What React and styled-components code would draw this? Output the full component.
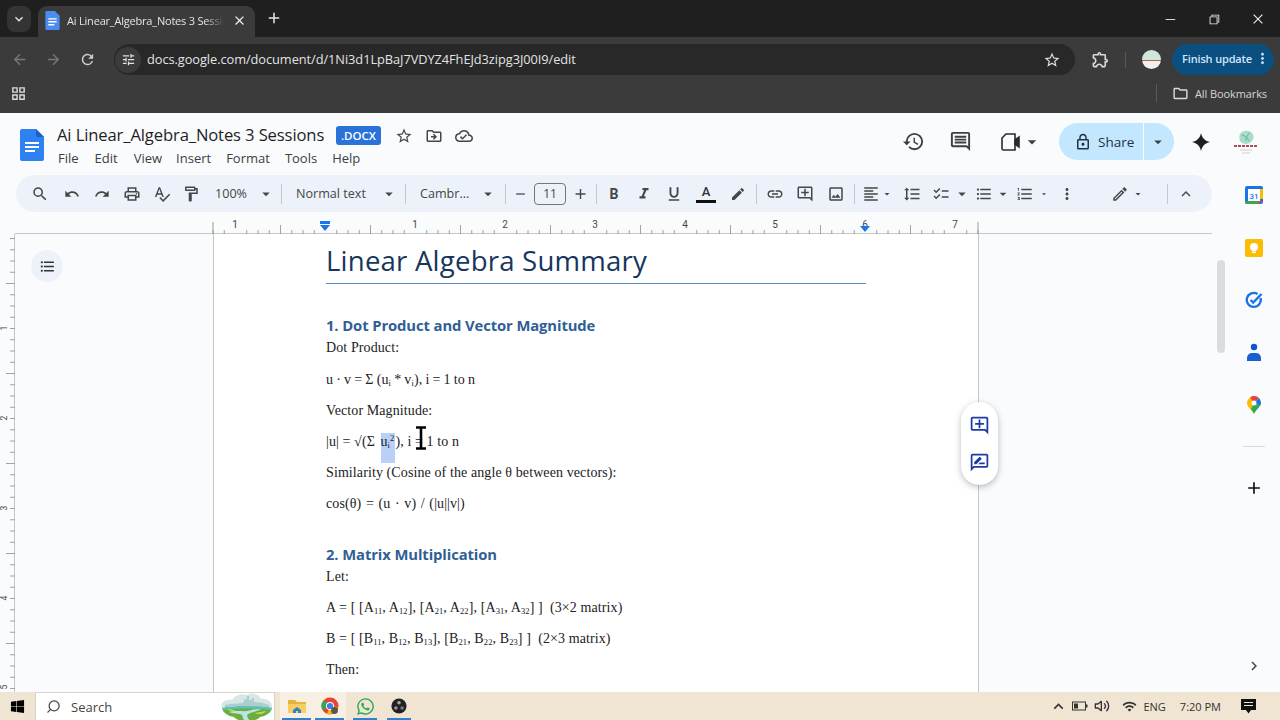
import React from "react";
import styled, { createGlobalStyle } from "styled-components";
import {
  MdSearch, MdUndo, MdRedo, MdOutlinePrint, MdSpellcheck, MdOutlineFormatPaint, MdRemove, MdAdd,
  MdFormatItalic, MdFormatUnderlined, MdLink, MdOutlineAddComment, MdOutlineImage, MdFormatAlignLeft,
  MdFormatLineSpacing, MdChecklist, MdFormatListBulleted, MdFormatListNumbered, MdMoreVert, MdOutlineEdit,
  MdKeyboardArrowUp, MdArrowDropDown, MdHistory, MdOutlineMessage, MdLockOutline,
  MdStarBorder, MdOutlineDriveFileMove, MdOutlineCloudDone, MdArrowBack, MdArrowForward, MdRefresh,
  MdOutlineTune, MdOutlineExtension, MdKeyboardArrowDown, MdClose, MdOutlineGridView, MdOutlineFolder,
  MdChevronRight, MdOutlineRateReview, MdEdit, MdWifi,
} from "react-icons/md";
import { VscChromeMinimize, VscChromeRestore, VscChromeClose } from "react-icons/vsc";
import { FaWindows, FaWhatsapp } from "react-icons/fa";
import { FiSearch, FiVolume2 } from "react-icons/fi";

const Global = createGlobalStyle`
  html, body { margin: 0; padding: 0; background: #f9fbfd; }
  * { box-sizing: border-box; }
`;

const Page = styled.div`
  width: 1280px; height: 720px; overflow: hidden; display: flex; flex-direction: column;
  font-family: "Open Sans", "Liberation Sans", sans-serif;
`;

/* Browser chrome */
const TabStrip = styled.div`
  height: 37px; background: #1f1f1f; display: flex; align-items: flex-end; padding-left: 7px; position: relative; flex: none;
`;
const TabList = styled.div`
  width: 24px; height: 26px; margin-bottom: 5px; border-radius: 8px; background: #343434; color: #e6e6e6;
  display: flex; align-items: center; justify-content: center; font-size: 16px;
`;
const Tab = styled.div`
  width: 217px; height: 31px; margin-left: 7px; background: #3b3b3b; border-radius: 9px 9px 0 0;
  display: flex; align-items: center; padding: 0 0 2px 7px; color: #e4e4e4; font-size: 11px; white-space: nowrap;
`;
const TabTitle = styled.span`
  width: 157px; margin-left: 7px; overflow: hidden; letter-spacing: -.2px;
  -webkit-mask-image: linear-gradient(90deg, #000 88%, transparent);
  mask-image: linear-gradient(90deg, #000 88%, transparent);
`;
const TabClose = styled.span`
  margin-left: 8px; display: flex; font-size: 15px; color: #eee;
`;
const NewTab = styled.span`
  margin: 0 0 7px 10px; display: flex; font-size: 18px; color: #e8e8e8; align-self: flex-end; height: 24px; align-items: center;
`;
const WindowControls = styled.div`
  margin-left: auto; height: 37px; display: flex; align-items: center; color: #f0f0f0; font-size: 14px;
`;
const WinBtn = styled.span`
  width: 44px; display: flex; justify-content: center;
`;
const NavBar = styled.div`
  height: 38px; background: #3b3b3b; display: flex; align-items: center; flex: none; color: #c8c8c8; padding: 7px 0 0 11px;
`;
const NavBtn = styled.span`
  width: 34px; display: flex; font-size: 17px; color: ${p => p.$dim ? "#777" : "#cfcfcf"};
`;
const AddressBar = styled.div`
  width: 961px; height: 31px; border-radius: 16px; background: #282828; margin-left: 1px;
  display: flex; align-items: center; padding-right: 14px;
`;
const SiteBtn = styled.span`
  width: 26px; height: 26px; border-radius: 50%; background: #3b3b3b; margin-left: 1px; color: #e2e2e2;
  display: flex; align-items: center; justify-content: center; font-size: 15px;
`;
const Url = styled.span`
  margin: -2px 0 0 6px; color: #e3e3e3; font-size: 12.8px; letter-spacing: -.06px; flex: 1; white-space: nowrap;
`;
const NavIcon = styled.span`
  display: flex; font-size: ${p => p.$s || 18}px; color: #dcdcdc; margin-left: ${p => p.$ml || 0}px;
`;
const VRule = styled.span`
  width: 1px; height: ${p => p.$h || 16}px; background: #5a5a5a; margin-left: ${p => p.$ml || 0}px;
`;
const Avatar = styled.span`
  width: 19px; height: 19px; border-radius: 50%; margin-left: 16px;
  background: linear-gradient(#cfe6d8 0 52%, #c25a5a 52% 58%, #f2f2ec 58%);
`;
const UpdatePill = styled.span`
  width: 102px; height: 31px; border-radius: 16px; background: #0b4f80; margin-left: 11px; color: #cfe6fb;
  display: flex; align-items: center; padding: 0 0 2px 10px; font-size: 11px; letter-spacing: -.15px; white-space: nowrap; font-weight: 600;
  svg { font-size: 17px; margin-left: 2px; color: #bfe0fb; }
`;
const BookmarkBar = styled.div`
  height: 38px; background: #3b3b3b; display: flex; align-items: center; flex: none; color: #d6d6d6; padding: 0 0 2px 10px;
  font-size: 11px; letter-spacing: -.1px;
`;
const BookmarkLabel = styled.span`
  margin-left: 6px;
`;

/* Docs header */
const DocsHeader = styled.header`
  height: 57px; background: #f9fbfd; display: flex; align-items: flex-start; flex: none; padding-left: 20px;
`;
const LogoSlot = styled.span`
  margin-top: 16px; display: flex;
`;
const TitleBlock = styled.div`
  margin-left: 13px; margin-top: 10px;
`;
const TitleRow = styled.div`
  display: flex; align-items: center; height: 23px;
`;
const DocName = styled.span`
  font-size: 16.6px; color: #1f1f1f; letter-spacing: -.12px; white-space: nowrap; width: 279px;
`;
const Badge = styled.span`
  width: 45px; height: 19px; border-radius: 3px; background: #2a71d8; color: #fff; font-size: 11.5px; font-weight: 600;
  display: flex; align-items: center; justify-content: center; margin-top: 2px;
`;
const TitleIcon = styled.span`
  display: flex; font-size: 18px; color: #444746; margin-left: ${p => p.$ml}px; margin-top: 2px;
`;
const Menu = styled.nav`
  display: flex; height: 23px; align-items: center; color: #3c4043; font-size: 13px;
`;
const MenuItem = styled.span`
  margin-left: ${p => p.$ml}px;
`;
const HeaderRight = styled.div`
  margin-left: auto; height: 57px; display: flex; align-items: center; padding-right: 20px; color: #444746;
`;
const HeadIcon = styled.span`
  display: flex; font-size: ${p => p.$s || 24}px; margin-left: ${p => p.$ml || 0}px; color: #3c4043;
  transform: ${p => p.$flip ? "scaleX(-1)" : "none"};
`;
const Share = styled.div`
  width: 115px; height: 37px; border-radius: 19px; background: #c2e7ff; margin-left: 17px; display: flex; align-items: center;
  color: #1f3340; font-size: 13.5px; padding-left: 15px;
  svg { font-size: 18px; }
`;
const ShareText = styled.span`
  margin-left: 6px; width: 46px; height: 37px; display: flex; align-items: center; border-right: 1px solid #f9fbfd;
`;
const SparkSlot = styled.span`
  width: 20px; height: 20px; margin-left: 17px; display: flex;
`;
const LogoMark = styled.span`
  width: 28px; height: 28px; margin-left: 21px; display: flex;
`;

/* Work area */
const Workspace = styled.div`
  display: flex; flex: 1; min-height: 0;
`;
const MainColumn = styled.div`
  width: 1232px; display: flex; flex-direction: column; min-height: 0;
`;
const FormatBar = styled.div`
  height: 37px; margin: 5px 20px 0 16px; border-radius: 19px; background: #edf2fa; display: flex; align-items: center;
  padding-left: 9px; color: #444746; flex: none;
`;
const Tool = styled.span`
  flex: none; width: ${p => p.$w || 30}px; margin-left: ${p => p.$ml || 0}px; display: flex; justify-content: center; align-items: center;
  font-size: ${p => p.$s || 18}px; color: #444746; position: relative;
`;
const Sel = styled.span`
  flex: none; width: ${p => p.$w}px; padding-left: ${p => p.$pl || 8}px; display: flex; align-items: center; justify-content: space-between;
  font-size: 12.6px; color: #444746; white-space: nowrap;
  svg { font-size: 18px; flex: none; }
`;
const Sep = styled.span`
  flex: none; height: 20px; width: 1px; background: #c7c7c7; margin: 0 ${p => p.$m ?? 6}px 0 ${p => p.$ml ?? p.$m ?? 6}px;
`;
const SizeBox = styled.span`
  flex: none; width: 32px; height: 22px; margin: 0 6px; border: 1px solid #747775; border-radius: 4px; font-size: 12px; color: #444746;
  display: flex; align-items: center; justify-content: center;
`;
const Bold = styled.span`
  font: 700 14px "Roboto", sans-serif; color: #444746;
`;
const ColorA = styled.span`
  width: 20px; display: flex; flex-direction: column; align-items: center; font: 500 13px/15px "Roboto", sans-serif; color: #333;
  &::after { content: ""; width: 20px; height: 3px; background: #111; margin-top: 1px; }
`;
const RulerSvg = styled.svg`
  display: block; margin: 6px 0 0 15px; flex: none;
`;
const DocRow = styled.div`
  flex: 1; display: flex; min-height: 0; position: relative; overflow: hidden;
`;
const VRuler = styled.svg`
  flex: none; display: block;
`;
const OutlineCol = styled.div`
  width: 198px; flex: none; padding: 16px 0 0 16px;
`;
const OutlineBtn = styled.span`
  width: 32px; height: 32px; border-radius: 50%; background: #edf2fa; display: flex; align-items: center; justify-content: center;
  font-size: 17px; color: #333;
`;
const DocPage = styled.main`
  width: 766px; flex: none; background: #fff; border-left: 1px solid #c7c7c7; border-right: 1px solid #c7c7c7;
  padding: 8px 0 0 112px; font-family: "Liberation Serif", serif; color: #222;
`;
const Title = styled.h1`
  width: 540px; height: 42px; margin: 0; border-bottom: 1px solid #5b8bc4; padding: 0;
  font: 400 27.6px/36px "Open Sans", sans-serif; color: #17365d; letter-spacing: .2px; white-space: nowrap;
`;
const Heading = styled.h2`
  margin: ${p => p.$mt}px 0 0; height: 22px; font: 700 14.8px/22px "Open Sans", sans-serif; color: #2f5f95; letter-spacing: -.1px; white-space: nowrap;
`;
const Line = styled.p`
  margin: 0; padding-top: 1px; height: ${p => p.$h || 31}px; font-size: 14px; line-height: 22px; letter-spacing: .1px; white-space: pre;
  word-spacing: ${p => p.$ws || 0}px;
`;
const Sub = styled.sub`
  font-size: 8.5px; line-height: 0; vertical-align: -2px;
`;
const Sup = styled.sup`
  font-size: 8.5px; line-height: 0; vertical-align: 5px;
`;
const Selection = styled.span`
  display: inline-block; background: #b9d1f6; line-height: 17px; padding: 0 1px 13px 0; margin: -2px 0 0 2px; vertical-align: baseline;
`;
const Caret = styled.svg`
  position: absolute; left: 415px; top: 192px;
`;
const FloatPill = styled.div`
  position: absolute; left: 961px; top: 168px; width: 37px; height: 83px; border-radius: 19px; background: #fff;
  box-shadow: 0 2px 6px rgba(60,64,67,.35); display: flex; flex-direction: column; align-items: center; justify-content: center; gap: 16px;
  font-size: 21px; color: #1c3aa9;
  svg { display: block; }
`;
const ScrollZone = styled.div`
  flex: 1; padding: 26px 0 0 238px;
`;
const Thumb = styled.div`
  width: 8px; height: 93px; border-radius: 4px; background: #dadce0;
`;
const SidePanel = styled.aside`
  width: 48px; display: flex; flex-direction: column; align-items: center; padding: 15px 4px 0 0; flex: none;
`;
const SideIcon = styled.span`
  width: 20px; height: 20px; margin-top: ${p => p.$mt || 0}px; display: flex; align-items: center; justify-content: center;
  color: ${p => p.$c || "#111"};
  font-size: ${p => p.$s || 20}px;
`;
const SideDivider = styled.span`
  width: 22px; height: 1px; background: #dadce0; margin-top: 31px;
`;

/* Windows taskbar */
const Taskbar = styled.footer`
  height: 28px; flex: none; background: #f0e5d2; display: flex; align-items: stretch; color: #222; position: relative;
`;
const StartBtn = styled.span`
  width: 35px; display: flex; align-items: center; justify-content: center; font-size: 15px; color: #000;
`;
const SearchBox = styled.div`
  width: 240px; background: #fff; border: 1px solid #d9d3c6; border-bottom: 0; display: flex; align-items: center; padding-left: 10px;
  font-size: 13px; color: #444; position: relative; overflow: hidden;
  svg.mag { font-size: 15px; transform: scaleX(-1); margin-right: 10px; }
`;
const Scene = styled.svg`
  position: absolute; right: 1px; top: 0;
`;
const TaskApp = styled.span`
  width: ${p => p.$w}px; margin-left: ${p => p.$ml || 0}px; display: flex; align-items: center; justify-content: center; position: relative;
  background: ${p => p.$active ? "#f6efe2" : "transparent"};
  &::after { content: ""; position: absolute; left: 2px; right: 2px; bottom: 0; height: 2px; background: #2f80d0; }
`;
const Tray = styled.div`
  margin-left: auto; display: flex; align-items: center; font-size: 11px; color: #333; padding-right: 24px;
`;
const TrayIcon = styled.span`
  display: flex; font-size: ${p => p.$s || 16}px; margin-left: ${p => p.$ml || 0}px; color: #333;
`;
const TrayText = styled.span`
  margin-left: ${p => p.$ml}px;
`;

const DocsLogo = () => (
  <svg width="24" height="32" viewBox="0 0 24 32">
    <path d="M2 0h14l8 8v22a2 2 0 0 1-2 2H2a2 2 0 0 1-2-2V2a2 2 0 0 1 2-2z" fill="#2f80f0" />
    <path d="M16 0l8 8h-6a2 2 0 0 1-2-2z" fill="#1a5fc8" />
    <path d="M5 13h14v2H5zm0 4h14v2H5zm0 4h10v2H5z" fill="#fff" />
  </svg>
);
const TabDoc = () => (
  <svg width="15" height="19" viewBox="0 0 24 32">
    <path d="M2 0h14l8 8v22a2 2 0 0 1-2 2H2a2 2 0 0 1-2-2V2a2 2 0 0 1 2-2z" fill="#4a8cf0" />
    <path d="M5 12h14v2.4H5zm0 5h14v2.4H5zm0 5h10v2.4H5z" fill="#fff" />
  </svg>
);
const Spark = () => (
  <svg width="20" height="20" viewBox="0 0 20 20"><path d="M10 1c1 5 4 8 9 9-5 1-8 4-9 9-1-5-4-8-9-9 5-1 8-4 9-9z" fill="#1f1f1f" /></svg>
);
const Camera = () => (
  <svg width="22" height="20" viewBox="0 0 22 20" fill="none" stroke="#2b2b2b" strokeWidth="1.6">
    <path d="M6 2h9v16H3.5A1.5 1.5 0 0 1 2 16.5V6z" />
    <path d="M15 8l4-3v10l-4-3z" fill="#2b2b2b" />
  </svg>
);
const Logo = () => (
  <svg width="28" height="28" viewBox="0 0 28 28">
    <path d="M8 6c3-4 9-4 12-1 3 3 1 8-2 10-4 2-8 1-10-2-1-2-1-5 0-7z" fill="#a9dcc9" />
    <path d="M10 7c3 1 6 3 7 6M18 5c-2 1-4 4-4 8" stroke="#5fb79c" strokeWidth="1" fill="none" />
    <path d="M2 18h24" stroke="#b5485a" strokeWidth="2" strokeDasharray="3 1" />
    <path d="M8 22h12M10 25h8" stroke="#cfcfcf" strokeWidth="1" />
  </svg>
);
const Calendar = () => (
  <svg width="18" height="18" viewBox="0 0 18 18">
    <rect width="18" height="18" rx="2" fill="#1a73e8" />
    <rect x="3" y="3" width="12" height="12" fill="#fff" />
    <path d="M0 15h13v3H2a2 2 0 0 1-2-2z" fill="#34a853" />
    <path d="M15 3h3v10h-3z" fill="#fbbc04" />
    <path d="M13 15h5l-5 3z" fill="#ea4335" />
    <text x="9" y="12.5" fontSize="8" textAnchor="middle" fontFamily="Roboto" fontWeight="500" fill="#1a73e8">31</text>
  </svg>
);
const Keep = () => (
  <svg width="18" height="18" viewBox="0 0 18 18">
    <rect width="18" height="18" rx="2" fill="#fbbc04" />
    <circle cx="9" cy="8" r="4" fill="#fff" />
    <rect x="7" y="12.5" width="4" height="1.6" fill="#fff" />
  </svg>
);
const Tasks = () => (
  <svg width="18" height="18" viewBox="0 0 18 18">
    <path d="M15.5 7a7 7 0 1 1-3-4" fill="none" stroke="#1a73e8" strokeWidth="2.4" />
    <path d="M5.6 9l2.6 2.6L16.5 3" fill="none" stroke="#1a73e8" strokeWidth="2.4" />
  </svg>
);
const Contacts = () => (
  <svg width="16" height="18" viewBox="0 0 16 18">
    <circle cx="8" cy="4" r="3.2" fill="#0b57d0" />
    <path d="M1 18v-3a5 5 0 0 1 5-5h4a5 5 0 0 1 5 5v3z" fill="#1a5fd0" />
  </svg>
);
const MapsPin = () => (
  <svg width="14" height="18" viewBox="0 0 14 18">
    <path d="M7 18C5 14 0 11 0 7a7 7 0 0 1 3-5.6l4 5z" fill="#fbbc04" />
    <path d="M3 1.4A7 7 0 0 1 12 2L7 7z" fill="#ea4335" />
    <path d="M12 2a7 7 0 0 1 2 5c0 1-.3 2-1 3L7 7z" fill="#1a73e8" />
    <path d="M13 10c-2 3-5 5-6 8-.5-1.5-1.6-3-3-5l3-6z" fill="#34a853" />
    <circle cx="7" cy="7" r="2.5" fill="#fff" />
  </svg>
);
const FolderApp = () => (
  <svg width="18" height="16" viewBox="0 0 18 16">
    <path d="M0 2h7l2 2h9v3H0z" fill="#e8b23c" />
    <path d="M0 6h18v9H0z" fill="#f7cf5e" />
    <path d="M5 12l4-3 4 3v3h-3v-2H8v2H5z" fill="#2f7fd0" />
  </svg>
);
const ChromeApp = () => (
  <svg width="18" height="18" viewBox="0 0 18 18">
    <circle cx="9" cy="9" r="8.5" fill="#ea4335" />
    <path d="M9 9L1.5 13A8.5 8.5 0 0 1 3 3z" fill="#34a853" />
    <path d="M9 9l7.5 1A8.5 8.5 0 0 1 6 17z" fill="#fbbc04" />
    <circle cx="9" cy="9" r="4" fill="#fff" /><circle cx="9" cy="9" r="3.1" fill="#3d7fe8" />
    <circle cx="13.5" cy="13.5" r="3.4" fill="#555" />
  </svg>
);
const ObsApp = () => (
  <svg width="16" height="16" viewBox="0 0 16 16">
    <circle cx="8" cy="8" r="7.6" fill="#222" />
    <circle cx="8" cy="4.7" r="1.8" fill="#aaa" /><circle cx="4.9" cy="10" r="1.8" fill="#999" /><circle cx="11.1" cy="10" r="1.8" fill="#777" />
  </svg>
);
const IBeam = () => (
  <Caret width="12" height="24" viewBox="0 0 12 24">
    <path d="M1 1.5h10M1 22.5h10M6 1.5v21" stroke="#000" strokeWidth="2.6" fill="none" />
  </Caret>
);
const Landscape = () => (
  <Scene width="52" height="28" viewBox="0 0 52 28">
    <path d="M1 15C-1 9 5 6 11 7c3-5 9-7 15-5 5-3 12-1 14 4 6-1 12 3 11 9z" fill="#d8e6e6" />
    <path d="M4 12c8-2 12-1 18-2l2-4h2v-3h2v4h3v-2h2v4c6 0 10 1 15 3v3H4z" fill="#a9cfd0" />
    <path d="M1 15c12-2 38-2 50 0-1 5-6 8-12 9-2 3-8 4-13 4s-11-1-13-4C7 23 2 20 1 15z" fill="#6fae3c" />
    <path d="M1 15c12-2 38-2 50 0l-1 2c-12-2-36-2-48 0z" fill="#57c1c4" />
    <path d="M8 19c8-2 14 0 18-1 5-1 8-2 14-2-5 3-10 3-13 5-2 2 0 4 2 7h-5c-3-3-2-5-3-6-2-2-9-1-13-3z" fill="#b7e6ea" />
    <path d="M6 16c4 0 7 1 9 2-3 1-7 0-9-2zM34 20c4-1 8-1 11-2-2 3-8 4-11 2z" fill="#c6dd5a" />
  </Scene>
);

const ticks = [];
for (let i = 0; i <= 68; i++) {
  const x = 213 + i * 11.25;
  if (i % 8 === 2) continue;
  const major = i % 8 === 6;
  ticks.push(<line key={i} x1={x} x2={x} y1={major ? 225 : 230} y2="234" stroke="#8a8d90" strokeWidth=".8" />);
}
const hNums = [[235, 1], [415, 1], [505, 2], [595, 3], [685, 4], [775, 5], [865, 6], [955, 7]];
const Ruler = () => (
  <RulerSvg width="1197" height="16" viewBox="15 218 1197 16">
    <line x1="15" x2="1212" y1="233.5" y2="233.5" stroke="#c7c7c7" />
    {ticks}
    <line x1="213" x2="213" y1="222" y2="234" stroke="#9a9a9a" />
    <line x1="978" x2="978" y1="222" y2="234" stroke="#9a9a9a" />
    {hNums.map(([x, n]) => (
      <text key={x} x={x} y="228" fontSize="10" textAnchor="middle" fontFamily="Roboto" fill="#444746">{n}</text>
    ))}
    <rect x="320" y="221" width="10" height="3" fill="#1a73e8" />
    <path d="M320 225h10l-5 6z" fill="#1a73e8" />
    <path d="M860 226h10l-5 6z" fill="#1a73e8" />
  </RulerSvg>
);
const vTicks = [];
for (let i = 0; i < 42; i++) {
  const y = 238.5 + i * 11.25;
  const major = i % 8 === 4;
  vTicks.push(<line key={i} x1={major ? 6 : 10} x2="15" y1={y} y2={y} stroke="#8a8d90" strokeWidth=".8" />);
}
const VerticalRuler = () => (
  <VRuler width="15" height="458" viewBox="0 234 15 458">
    <line x1="14.5" x2="14.5" y1="234" y2="692" stroke="#c7c7c7" />
    {vTicks}
    {[[328, 1], [418, 2], [508, 3], [598, 4]].map(([y, n]) => (
      <text key={y} x="5" y={y} fontSize="8.5" textAnchor="middle" fontFamily="Roboto" fill="#444746" transform={`rotate(-90 5 ${y})`} dominantBaseline="middle">{n}</text>
    ))}
    <text x="5" y="687" fontSize="8.5" textAnchor="middle" fontFamily="Roboto" fill="#444746" transform="rotate(-90 5 687)" dominantBaseline="middle">5</text>
  </VRuler>
);

export default function App() {
  return (
    <Page>
      <Global />
      <TabStrip>
        <TabList><MdKeyboardArrowDown /></TabList>
        <Tab>
          <TabDoc />
          <TabTitle>Ai Linear_Algebra_Notes 3 Sessions</TabTitle>
          <TabClose><MdClose /></TabClose>
        </Tab>
        <NewTab><MdAdd /></NewTab>
        <WindowControls>
          <WinBtn><VscChromeMinimize /></WinBtn>
          <WinBtn><VscChromeRestore /></WinBtn>
          <WinBtn><VscChromeClose /></WinBtn>
        </WindowControls>
      </TabStrip>
      <NavBar>
        <NavBtn $dim><MdArrowBack /></NavBtn>
        <NavBtn $dim><MdArrowForward /></NavBtn>
        <NavBtn><MdRefresh /></NavBtn>
        <AddressBar>
          <SiteBtn><MdOutlineTune /></SiteBtn>
          <Url>docs.google.com/document/d/1Ni3d1LpBaJ7VDYZ4FhEJd3zipg3J00I9/edit</Url>
          <NavIcon $s={18}><MdStarBorder /></NavIcon>
        </AddressBar>
        <NavIcon $s={19} $ml={16}><MdOutlineExtension /></NavIcon>
        <VRule $h={16} $ml={15} />
        <Avatar />
        <UpdatePill>Finish update<MdMoreVert /></UpdatePill>
      </NavBar>
      <BookmarkBar>
        <NavIcon $s={17}><MdOutlineGridView /></NavIcon>
        <VRule $h={18} $ml={1129} />
        <NavIcon $s={17} $ml={15}><MdOutlineFolder /></NavIcon>
        <BookmarkLabel>All Bookmarks</BookmarkLabel>
      </BookmarkBar>

      <DocsHeader>
        <LogoSlot><DocsLogo /></LogoSlot>
        <TitleBlock>
          <TitleRow>
            <DocName>Ai Linear_Algebra_Notes 3 Sessions</DocName>
            <Badge>.DOCX</Badge>
            <TitleIcon $ml={14}><MdStarBorder /></TitleIcon>
            <TitleIcon $ml={12}><MdOutlineDriveFileMove /></TitleIcon>
            <TitleIcon $ml={12}><MdOutlineCloudDone /></TitleIcon>
          </TitleRow>
          <Menu>
            <MenuItem $ml={1}>File</MenuItem>
            <MenuItem $ml={16}>Edit</MenuItem>
            <MenuItem $ml={16}>View</MenuItem>
            <MenuItem $ml={14}>Insert</MenuItem>
            <MenuItem $ml={15}>Format</MenuItem>
            <MenuItem $ml={15}>Tools</MenuItem>
            <MenuItem $ml={15}>Help</MenuItem>
          </Menu>
        </TitleBlock>
        <HeaderRight>
          <HeadIcon $s={23}><MdHistory /></HeadIcon>
          <HeadIcon $s={23} $ml={24} $flip><MdOutlineMessage /></HeadIcon>
          <HeadIcon $s={22} $ml={28}><Camera /></HeadIcon>
          <HeadIcon $s={20}><MdArrowDropDown /></HeadIcon>
          <Share>
            <MdLockOutline />
            <ShareText>Share</ShareText>
            <HeadIcon $s={20} $ml={5}><MdArrowDropDown /></HeadIcon>
          </Share>
          <SparkSlot><Spark /></SparkSlot>
          <LogoMark><Logo /></LogoMark>
        </HeaderRight>
      </DocsHeader>

      <Workspace>
        <MainColumn>
          <FormatBar>
            <Tool><MdSearch /></Tool>
            <Tool $ml={2} $s={16}><MdUndo /></Tool>
            <Tool $s={16}><MdRedo /></Tool>
            <Tool><MdOutlinePrint /></Tool>
            <Tool $w={29}><MdSpellcheck /></Tool>
            <Tool><MdOutlineFormatPaint /></Tool>
            <Sel $w={69} $pl={9}>100%<MdArrowDropDown /></Sel>
            <Sep />
            <Sel $w={110} $pl={8}>Normal text<MdArrowDropDown /></Sel>
            <Sep $m={6} $ml={7} />
            <Sel $w={85} $pl={8}>Cambr...<MdArrowDropDown /></Sel>
            <Sep $m={7} $ml={8} />
            <Tool $w={15}><MdRemove /></Tool>
            <SizeBox>11</SizeBox>
            <Tool $w={17}><MdAdd /></Tool>
            <Sep $m={7} $ml={7} />
            <Tool $w={20}><Bold>B</Bold></Tool>
            <Tool $w={40}><MdFormatItalic /></Tool>
            <Tool $w={20}><MdFormatUnderlined /></Tool>
            <Tool $w={44}><ColorA>A</ColorA></Tool>
            <Tool $w={20} $s={16}><MdEdit /></Tool>
            <Sep $m={7} $ml={8} />
            <Tool $w={22}><MdLink /></Tool>
            <Tool $w={38}><MdOutlineAddComment /></Tool>
            <Tool $w={24}><MdOutlineImage /></Tool>
            <Sep $m={6} />
            <Tool $w={20}><MdFormatAlignLeft /></Tool>
            <Tool $w={12}><MdArrowDropDown /></Tool>
            <Tool $w={38}><MdFormatLineSpacing /></Tool>
            <Tool $w={20}><MdChecklist /></Tool>
            <Tool $w={22}><MdArrowDropDown /></Tool>
            <Tool $w={22}><MdFormatListBulleted /></Tool>
            <Tool $w={16}><MdArrowDropDown /></Tool>
            <Tool $w={28}><MdFormatListNumbered /></Tool>
            <Tool $w={10}><MdArrowDropDown /></Tool>
            <Tool $w={36}><MdMoreVert /></Tool>
            <Tool $w={24} $ml={23}><MdOutlineEdit /></Tool>
            <Tool $w={12}><MdArrowDropDown /></Tool>
            <Sep $m={0} $ml={23} />
            <Tool $w={36}><MdKeyboardArrowUp /></Tool>
          </FormatBar>
          <Ruler />
          <DocRow>
            <VerticalRuler />
            <OutlineCol><OutlineBtn><MdFormatListBulleted /></OutlineBtn></OutlineCol>
            <DocPage>
              <Title>Linear Algebra Summary</Title>
              <Heading $mt={30}>1. Dot Product and Vector Magnitude</Heading>
              <Line $h={32}>Dot Product:</Line>
              <Line $ws={-0.5}>u · v = Σ (u<Sub>i</Sub> * v<Sub>i</Sub>), i = 1 to n</Line>
              <Line>Vector Magnitude:</Line>
              <Line>|u| = √(Σ <Selection>u<Sub>i</Sub><Sup>2</Sup></Selection>), i = 1 to n</Line>
              <Line>Similarity (Cosine of the angle θ between vectors):</Line>
              <Line $h={20} $ws={1}>cos(θ) = (u · v) / (|u||v|)</Line>
              <Heading $mt={31}>2. Matrix Multiplication</Heading>
              <Line>Let:</Line>
              <Line>A = [ [A<Sub>11</Sub>, A<Sub>12</Sub>], [A<Sub>21</Sub>, A<Sub>22</Sub>], [A<Sub>31</Sub>, A<Sub>32</Sub>] ]  (3×2 matrix)</Line>
              <Line>B = [ [B<Sub>11</Sub>, B<Sub>12</Sub>, B<Sub>13</Sub>], [B<Sub>21</Sub>, B<Sub>22</Sub>, B<Sub>23</Sub>] ]  (2×3 matrix)</Line>
              <Line>Then:</Line>
            </DocPage>
            <ScrollZone><Thumb /></ScrollZone>
            <IBeam />
            <FloatPill><MdOutlineAddComment /><MdOutlineRateReview /></FloatPill>
          </DocRow>
        </MainColumn>
        <SidePanel>
          <SideIcon><Calendar /></SideIcon>
          <SideIcon $mt={33}><Keep /></SideIcon>
          <SideIcon $mt={32}><Tasks /></SideIcon>
          <SideIcon $mt={32}><Contacts /></SideIcon>
          <SideIcon $mt={33}><MapsPin /></SideIcon>
          <SideDivider />
          <SideIcon $mt={31} $s={22}><MdAdd /></SideIcon>
          <SideIcon $mt={158} $s={18} $c="#444746"><MdChevronRight /></SideIcon>
        </SidePanel>
      </Workspace>
      <Taskbar>
        <StartBtn><FaWindows /></StartBtn>
        <SearchBox>
          <FiSearch className="mag" />
          Search
          <Landscape />
        </SearchBox>
        <TaskApp $w={33} $ml={5} $active><FolderApp /></TaskApp>
        <TaskApp $w={33} $active><ChromeApp /></TaskApp>
        <TaskApp $w={28} $ml={5}><FaWhatsapp size={19} color="#2aa856" /></TaskApp>
        <TaskApp $w={28} $ml={6}><ObsApp /></TaskApp>
        <Tray>
          <TrayIcon $s={19}><MdKeyboardArrowUp /></TrayIcon>
          <TrayIcon $ml={4}>
            <svg width="16" height="12" viewBox="0 0 16 12"><rect x=".5" y="2" width="13" height="8" fill="none" stroke="#333" /><rect x="2" y="3.5" width="4" height="5" fill="#333" /><rect x="14" y="4.5" width="1.5" height="3" fill="#333" /></svg>
          </TrayIcon>
          <TrayIcon $ml={6}><FiVolume2 /></TrayIcon>
          <TrayIcon $ml={12} $s={15}><MdWifi /></TrayIcon>
          <TrayText $ml={6}>ENG</TrayText>
          <TrayText $ml={14}>7:20 PM</TrayText>
          <TrayIcon $ml={20}>
            <svg width="15" height="15" viewBox="0 0 15 15"><path d="M0 0h15v11h-5l-2.5 3.5L5 11H0z" fill="#111" /><path d="M3 3.5h9M3 6.5h9" stroke="#f0e5d2" /></svg>
          </TrayIcon>
        </Tray>
      </Taskbar>
    </Page>
  );
}
